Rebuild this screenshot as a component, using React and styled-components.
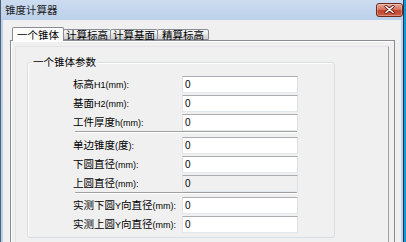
import React from "react";
import styled, { createGlobalStyle } from "styled-components";

const GlobalStyle = createGlobalStyle`
  html, body {
    margin: 0;
    padding: 0;
    background: #1597d3;
  }
  body {
    font-family: "Noto Sans CJK SC", "Liberation Sans", sans-serif;
  }
`;

const Window = styled.div`
  width: 404px;
  height: 242px;
  box-sizing: border-box;
  border-left: 1px solid #4e5f78;
  border-right: 1px solid #27364a;
  background: linear-gradient(to bottom, #cddcf0 0, #bbd0ea 20px, #b9d1ea 100%);
  display: flex;
  flex-direction: column;
  overflow: hidden;
`;

const TitleBar = styled.div`
  height: 20px;
  flex-shrink: 0;
  display: flex;
  align-items: center;
  justify-content: space-between;
  padding-left: 4px;
`;

const Title = styled.span`
  font-size: 10.5px;
  line-height: 1;
  color: #1e1e1e;
`;

const CloseButton = styled.div`
  width: 27px;
  height: 14px;
  margin-top: -1px;
  box-sizing: border-box;
  border: 1px solid #6d2a1f;
  border-radius: 3px;
  background: linear-gradient(to bottom, #e9a99a 0%, #d7745f 45%, #c3432c 55%, #cf5f47 100%);
  box-shadow: inset 0 0 0 1px rgba(255, 255, 255, 0.3);
  display: flex;
  align-items: center;
  justify-content: center;
`;

const Client = styled.div`
  flex: 1;
  margin: 0 2px;
  background: #f0f0f0;
  padding: 7px 6px 0 7px;
  display: flex;
  flex-direction: column;
`;

const TabStrip = styled.div`
  height: 13px;
  display: flex;
  align-items: flex-end;
  padding-left: 2px;
  position: relative;
  z-index: 1;
`;

const Tab = styled.div`
  box-sizing: border-box;
  width: ${(p) => p.$width}px;
  height: ${(p) => (p.$active ? 14 : 11)}px;
  margin-bottom: ${(p) => (p.$active ? -1 : 0)}px;
  margin-left: ${(p) => (p.$first ? 0 : -1)}px;
  border: 1px solid #898c95;
  border-bottom: ${(p) => (p.$active ? "none" : "1px solid #898c95")};
  border-radius: 2px 2px 0 0;
  background: ${(p) =>
    p.$active
      ? "#fcfcfc"
      : "linear-gradient(to bottom, #f4f4f4 0%, #ebebeb 45%, #dddddd 55%, #d2d2d2 100%)"};
  position: relative;
  z-index: ${(p) => (p.$active ? 2 : 1)};
  font-size: 10.5px;
  line-height: ${(p) => (p.$active ? 13 : 9)}px;
  text-align: center;
  color: #000;
  white-space: nowrap;
`;

const Panel = styled.div`
  flex: 1;
  border: 1px solid #898c95;
  border-bottom: none;
  box-shadow: inset 1px 1px 0 #ffffff;
  padding: 5px 5px 0 4px;
  display: flex;
  flex-direction: column;
`;

const Page = styled.div`
  flex: 1;
  border-top: 1px solid #e4e4e4;
  border-left: 1px solid #e4e4e4;
  border-right: 1px solid #a0a0a0;
  padding: 15px 0 0 11px;
`;

const Group = styled.div`
  position: relative;
  width: 308px;
  box-sizing: border-box;
  border: 1px solid #d5dfe5;
  border-radius: 3px;
  box-shadow: inset 1px 1px 0 #ffffff;
  padding: 12px 0 5px 0;
`;

const Legend = styled.span`
  position: absolute;
  top: -8px;
  left: 4px;
  padding: 0 1px;
  background: #f0f0f0;
  font-size: 10.5px;
  line-height: 14px;
  color: #000;
`;

const Rows = styled.div`
  display: flex;
  flex-direction: column;
  gap: 2px;
`;

const Row = styled.div`
  display: grid;
  grid-template-columns: 109px 116px;
  padding-left: 45px;
  height: 17px;
  align-items: center;
`;

const Label = styled.span`
  font-size: 10.5px;
  line-height: 17px;
  color: #000;
  white-space: nowrap;
`;

const Latin = styled.span`
  font-family: "Liberation Sans", sans-serif;
  font-size: 9px;
`;

const Field = styled.input`
  box-sizing: border-box;
  width: 116px;
  height: 17px;
  margin: 0;
  padding: 0 2px;
  border: 1px solid;
  border-color: #abadb3 #dbdfe6 #e3e9ef #e2e3ea;
  background: ${(p) => (p.$disabled ? "#f0f0f0" : "#ffffff")};
  font-family: "Liberation Sans", sans-serif;
  font-size: 10px;
  color: #000;
  outline: none;
`;

const Separator = styled.div`
  width: 222px;
  margin: 1px 0 ${(p) => p.$after}px 47px;
  border-top: 1px solid #a0a0a0;
  border-bottom: 1px solid #ffffff;
`;

const tabs = [
  { name: "一个锥体", width: 52 },
  { name: "计算标高", width: 48 },
  { name: "计算基面", width: 48 },
  { name: "精算标高", width: 52 },
];

const groups = [
  [
    { label: "标高H1(mm):" },
    { label: "基面H2(mm):" },
    { label: "工件厚度h(mm):" },
  ],
  [
    { label: "单边锥度(度):" },
    { label: "下圆直径(mm):" },
    { label: "上圆直径(mm):", disabled: true },
  ],
  [
    { label: "实测下圆Y向直径(mm):" },
    { label: "实测上圆Y向直径(mm):" },
  ],
];

// latin runs are set smaller than the hanzi, as in the original dialog
function LabelText({ text }) {
  const parts = text.split(/([A-Za-z0-9():]+)/).filter(Boolean);
  return parts.map((s, i) =>
    /^[A-Za-z0-9():]+$/.test(s) ? <Latin key={i}>{s}</Latin> : <React.Fragment key={i}>{s}</React.Fragment>
  );
}

function CloseIcon() {
  return (
    <svg width="11" height="9" viewBox="0 0 11 9">
      <path d="M2 1.5 L9 7.5 M9 1.5 L2 7.5" stroke="#5a1a12" strokeWidth="3" strokeLinecap="round" />
      <path d="M2 1.5 L9 7.5 M9 1.5 L2 7.5" stroke="#ffffff" strokeWidth="1.6" strokeLinecap="round" />
    </svg>
  );
}

export default function App() {
  return (
    <>
      <GlobalStyle />
      <Window>
        <TitleBar>
          <Title>锥度计算器</Title>
          <CloseButton>
            <CloseIcon />
          </CloseButton>
        </TitleBar>
        <Client>
          <TabStrip>
            {tabs.map((t, i) => (
              <Tab key={t.name} $width={t.width} $active={i === 0} $first={i === 0}>
                {t.name}
              </Tab>
            ))}
          </TabStrip>
          <Panel>
            <Page>
              <Group>
                <Legend>一个锥体参数</Legend>
                {groups.map((rows, gi) => (
                  <React.Fragment key={gi}>
                    {gi > 0 && <Separator $after={gi === 1 ? 3 : 2} />}
                    <Rows>
                      {rows.map((r) => (
                        <Row key={r.label}>
                          <Label>
                            <LabelText text={r.label} />
                          </Label>
                          <Field defaultValue="0" readOnly $disabled={r.disabled} />
                        </Row>
                      ))}
                    </Rows>
                  </React.Fragment>
                ))}
              </Group>
            </Page>
          </Panel>
        </Client>
      </Window>
    </>
  );
}
